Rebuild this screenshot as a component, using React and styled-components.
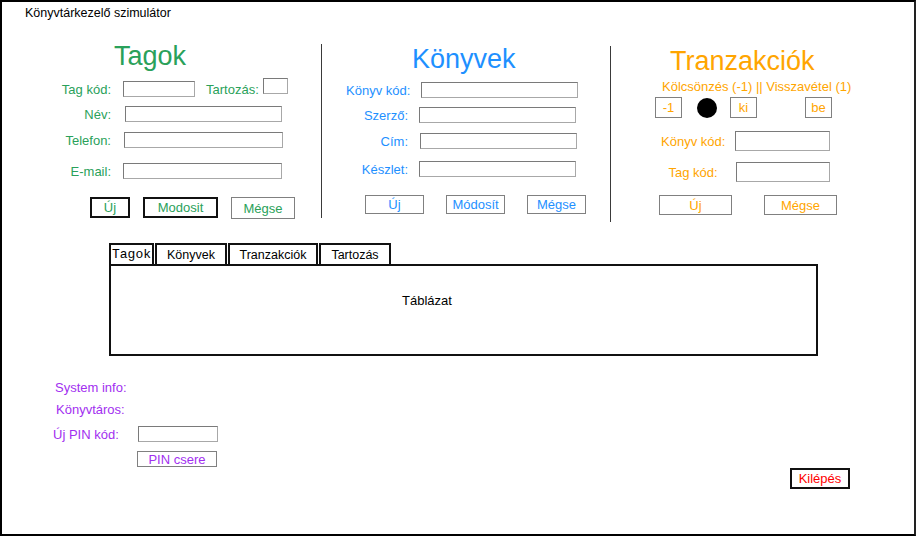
import React from "react";
import styled, { createGlobalStyle } from "styled-components";

const GREEN = "#2aa15a";
const BLUE = "#1e90ff";
const ORANGE = "#ffa500";
const PURPLE = "#a22ff0";
const RED = "#ff0000";

const GlobalStyle = createGlobalStyle`
  body {
    margin: 0;
    background: #ffffff;
    font-family: "Liberation Sans", Arial, sans-serif;
    font-size: 13px;
    color: #000;
  }
  * { box-sizing: border-box; }
`;

const Frame = styled.div`
  width: 916px;
  height: 536px;
  border: 2px solid #000;
  border-right-color: #222;
  display: flex;
  flex-direction: column;
`;

const Header = styled.div`
  padding: 3px 0 0 23px;
  height: 19px;
  line-height: 16px;
  font-size: 12.5px;
`;

const TopRow = styled.div`
  display: flex;
  margin-top: 20px;
  height: 182px;
`;

const Section = styled.div`
  width: ${(p) => (p.$w ? `${p.$w}px` : "auto")};
  flex: ${(p) => (p.$w ? "none" : "1")};
  display: flex;
  flex-direction: column;
  color: ${(p) => p.$color};
`;

const Divider = styled.div`
  width: 1px;
  background: #3a3a3a;
  margin-top: ${(p) => p.$top}px;
  height: ${(p) => p.$h}px;
`;

const Title = styled.div`
  font-size: 27px;
  line-height: 30px;
  height: 30px;
  margin-top: ${(p) => p.$top || 0}px;
  padding-left: ${(p) => p.$indent}px;
  white-space: nowrap;
`;

const Row = styled.div`
  display: flex;
  align-items: center;
  height: ${(p) => p.$h || 16}px;
  margin-top: ${(p) => p.$top}px;
  padding-left: ${(p) => p.$pad}px;
`;

const Label = styled.span`
  width: ${(p) => p.$w}px;
  flex: none;
  text-align: ${(p) => p.$align || "right"};
  white-space: nowrap;
  margin-right: ${(p) => p.$gap ?? 12}px;
`;

const InlineLabel = styled.span`
  margin-left: ${(p) => p.$ml}px;
  margin-right: 4px;
  white-space: nowrap;
`;

const Input = styled.div`
  width: ${(p) => p.$w}px;
  height: ${(p) => p.$h || 16}px;
  flex: none;
  border: 1px solid #7a7a7a;
  border-bottom-color: #a8a8a8;
  border-right-color: #a8a8a8;
  background: #fff;
  margin-bottom: ${(p) => p.$raise || 0}px;
`;

const ButtonRow = styled.div`
  display: flex;
  margin-top: ${(p) => p.$top}px;
  padding-left: ${(p) => p.$pad}px;
  gap: ${(p) => p.$gap}px;
`;

const Button = styled.div`
  width: ${(p) => p.$w}px;
  height: ${(p) => p.$h}px;
  flex: none;
  display: flex;
  align-items: center;
  justify-content: center;
  border: ${(p) => (p.$bold ? "2px solid #111" : "1px solid #808080")};
  color: ${(p) => p.$color || "inherit"};
  margin-left: ${(p) => p.$ml || 0}px;
  margin-top: ${(p) => p.$mt || 0}px;
  white-space: nowrap;
`;

const Subtitle = styled.div`
  margin-top: 4px;
  padding-left: 51px;
  line-height: 14px;
  white-space: nowrap;
`;

const Dot = styled.div`
  width: 20px;
  height: 20px;
  border-radius: 50%;
  background: #000;
  margin-left: 15px;
  flex: none;
`;

const TabArea = styled.div`
  margin: 20px 0 0 107px;
  width: 709px;
`;

const TabStrip = styled.div`
  display: flex;
  gap: 1px;
`;

const Tab = styled.div`
  width: ${(p) => p.$w}px;
  height: 21px;
  border: 2px solid #111;
  border-bottom: none;
  display: flex;
  align-items: center;
  justify-content: center;
  font-family: ${(p) =>
    p.$mono ? '"Liberation Mono", "Courier New", monospace' : "inherit"};
  font-size: ${(p) => (p.$mono ? 13 : 12.5)}px;
`;

const Panel = styled.div`
  height: 92px;
  border: 2px solid #111;
  padding: 27px 0 0 291px;
  line-height: 16px;
`;

const Bottom = styled.div`
  display: flex;
  justify-content: space-between;
  align-items: flex-start;
  padding: 0 64px 0 51px;
`;

const Info = styled.div`
  display: flex;
  flex-direction: column;
  color: ${PURPLE};
`;

const InfoLine = styled.div`
  line-height: 16px;
  margin-top: ${(p) => p.$top}px;
  padding-left: ${(p) => p.$pad || 0}px;
`;

export default function App() {
  return (
    <>
      <GlobalStyle />
      <Frame>
        <Header>Könyvtárkezelő szimulátor</Header>

        <TopRow>
          <Section $w={319} $color={GREEN}>
            <Title $indent={112}>Tagok</Title>
            <Row $top={10} $pad={40}>
              <Label $w={69}>Tag kód:</Label>
              <Input $w={72} />
              <InlineLabel $ml={11}>Tartozás:</InlineLabel>
              <Input $w={25} $raise={6} />
            </Row>
            <Row $top={9} $pad={40}>
              <Label $w={69} $gap={14}>Név:</Label>
              <Input $w={157} />
            </Row>
            <Row $top={10} $pad={40}>
              <Label $w={69} $gap={13}>Telefon:</Label>
              <Input $w={159} />
            </Row>
            <Row $top={15} $pad={40}>
              <Label $w={69}>E-mail:</Label>
              <Input $w={159} />
            </Row>
            <ButtonRow $top={18} $pad={88} $gap={13}>
              <Button $w={40} $h={21} $bold>Új</Button>
              <Button $w={75} $h={21} $bold>Modosit</Button>
              <Button $w={64} $h={22}>Mégse</Button>
            </ButtonRow>
          </Section>

          <Divider $top={3} $h={174} />

          <Section $w={288} $color={BLUE}>
            <Title $indent={90} $top={3}>Könyvek</Title>
            <Row $top={8} $pad={24}>
              <Label $w={62} $gap={13}>Könyv kód:</Label>
              <Input $w={157} />
            </Row>
            <Row $top={9} $pad={24}>
              <Label $w={62} $gap={11}>Szerző:</Label>
              <Input $w={157} />
            </Row>
            <Row $top={10} $pad={24}>
              <Label $w={62}>Cím:</Label>
              <Input $w={157} />
            </Row>
            <Row $top={12} $pad={24}>
              <Label $w={62} $gap={11}>Készlet:</Label>
              <Input $w={157} />
            </Row>
            <ButtonRow $top={18} $pad={43} $gap={22}>
              <Button $w={59} $h={19}>Új</Button>
              <Button $w={59} $h={19}>Módosít</Button>
              <Button $w={59} $h={19}>Mégse</Button>
            </ButtonRow>
          </Section>

          <Divider $top={5} $h={176} />

          <Section $color={ORANGE}>
            <Title $indent={59} $top={5}>Tranzakciók</Title>
            <Subtitle>Kölcsönzés (-1) || Visszavétel (1)</Subtitle>
            <Row $top={3} $h={21} $pad={44}>
              <Button $w={27} $h={21}>-1</Button>
              <Dot />
              <Button $w={27} $h={21} $ml={13}>ki</Button>
              <Button $w={27} $h={21} $ml={48}>be</Button>
            </Row>
            <Row $top={13} $h={20} $pad={50}>
              <Label $w={64} $align="center" $gap={10}>Könyv kód:</Label>
              <Input $w={95} $h={20} />
            </Row>
            <Row $top={11} $h={20} $pad={50}>
              <Label $w={64} $align="center" $gap={11}>Tag kód:</Label>
              <Input $w={94} $h={20} />
            </Row>
            <ButtonRow $top={13} $pad={48} $gap={32}>
              <Button $w={73} $h={20}>Új</Button>
              <Button $w={73} $h={20}>Mégse</Button>
            </ButtonRow>
          </Section>
        </TopRow>

        <TabArea>
          <TabStrip>
            <Tab $w={45} $mono>Tagok</Tab>
            <Tab $w={72}>Könyvek</Tab>
            <Tab $w={90}>Tranzakciók</Tab>
            <Tab $w={72}>Tartozás</Tab>
          </TabStrip>
          <Panel>Táblázat</Panel>
        </TabArea>

        <Bottom>
          <Info>
            <InfoLine $top={24} $pad={2}>System info:</InfoLine>
            <InfoLine $top={6} $pad={3}>Könyvtáros:</InfoLine>
            <Row $top={8} $pad={0}>
              <Label $w={85} $align="left" $gap={0}>Új PIN kód:</Label>
              <Input $w={80} />
            </Row>
            <ButtonRow $top={9} $pad={84} $gap={0}>
              <Button $w={80} $h={16}>PIN csere</Button>
            </ButtonRow>
          </Info>
          <Button $w={60} $h={21} $bold $color={RED} $mt={112}>
            Kilépés
          </Button>
        </Bottom>
      </Frame>
    </>
  );
}
